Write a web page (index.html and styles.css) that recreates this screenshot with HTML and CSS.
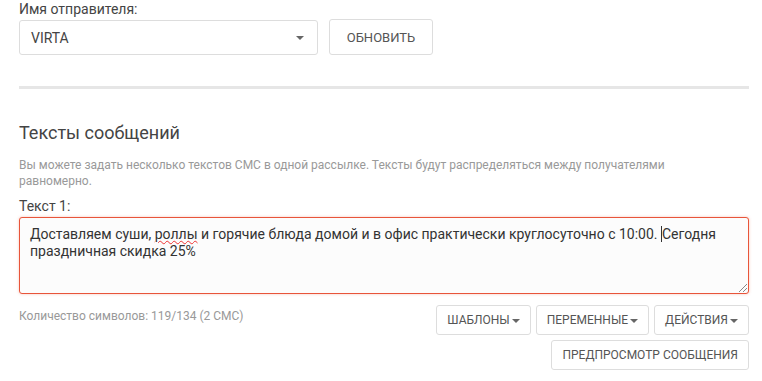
FILE: index.html
```html
<!DOCTYPE html>
<html lang="ru">
<head>
    <meta charset="UTF-8">
    <meta name="viewport" content="width=device-width, initial-scale=1.0">
    <title>Рассылка СМС</title>
    <link rel="stylesheet" href="styles.css">
</head>
<body>
    <div class="page">
        <div class="form-group">
            <label class="label" for="sender">Имя отправителя:</label>
            <div class="sender-row">
                <div class="select" id="sender">
                    <span>VIRTA</span>
                    <span class="caret"></span>
                </div>
                <button class="btn btn-lg">Обновить</button>
            </div>
        </div>

        <hr class="divider">

        <h2 class="section-title">Тексты сообщений</h2>
        <p class="hint">Вы можете задать несколько текстов СМС в одной рассылке. Тексты будут распределяться между получателями равномерно.</p>

        <div class="form-group">
            <label class="label" for="text1">Текст 1:</label>
            <div class="textarea" id="text1">Доставляем суши, <span class="misspelled">роллы</span> и горячие блюда домой и в офис практически круглосуточно с 10:00. <span class="cursor"></span>Сегодня праздничная скидка 25%<span class="grip"></span></div>
        </div>

        <div class="toolbar">
            <div class="counter">Количество символов: 119/134 (2 СМС)</div>
            <div class="actions">
                <div class="btn-row">
                    <button class="btn">Шаблоны<span class="caret"></span></button>
                    <button class="btn">Переменные<span class="caret"></span></button>
                    <button class="btn">Действия<span class="caret"></span></button>
                </div>
                <div class="btn-row">
                    <button class="btn">Предпросмотр сообщения</button>
                </div>
            </div>
        </div>
    </div>
</body>
</html>
```

FILE: styles.css
```css
body {
    margin: 0;
    font-family: Roboto, "Liberation Sans", sans-serif;
    color: #333;
    background: #fff;
}
.page {
    padding: 0 13px 0 19px;
}
.label {
    display: block;
    font-size: 14px;
    line-height: 18px;
    color: #444;
    margin-bottom: 2px;
}
.form-group {
    margin: 0;
}
.sender-row {
    display: flex;
    gap: 11px;
}
.select {
    width: 299px;
    height: 35px;
    box-sizing: border-box;
    border: 1px solid #ddd;
    border-radius: 3px;
    display: flex;
    align-items: center;
    justify-content: space-between;
    padding: 0 13px 0 11px;
    font-size: 14px;
    color: #444;
}
.caret {
    display: inline-block;
    width: 0;
    height: 0;
    border-left: 4px solid transparent;
    border-right: 4px solid transparent;
    border-top: 4px solid #666;
    vertical-align: middle;
}
.btn {
    font-family: inherit;
    background: #fff;
    border: 1px solid #ddd;
    border-radius: 3px;
    color: #555;
    font-size: 12px;
    text-transform: uppercase;
    height: 30px;
    padding: 0 10px;
    cursor: pointer;
}
.btn .caret {
    margin-left: 2px;
}
.btn-lg {
    height: 36px;
    width: 104px;
    margin-top: -1px;
    font-size: 13px;
}
.divider {
    border: 0;
    height: 3px;
    background: #e6e6e6;
    margin: 31px 0 0;
}
.section-title {
    font-size: 18px;
    font-weight: 400;
    color: #444;
    margin: 32px 0 0;
    line-height: 24px;
}
.hint {
    font-size: 12px;
    color: #999;
    line-height: 16px;
    margin: 12px 0 8px;
    max-width: 700px;
}
.textarea {
    position: relative;
    height: 77px;
    box-sizing: border-box;
    border: 1px solid #e8553a;
    border-radius: 3px;
    box-shadow: 0 0 3px rgba(232, 85, 58, 0.35);
    background: #fcfcfc;
    padding: 8px 10px;
    font-size: 14px;
    line-height: 17px;
    color: #333;
}
.misspelled {
    text-decoration: underline wavy #e33;
    text-decoration-thickness: 1px;
}
.cursor {
    display: inline-block;
    width: 1px;
    height: 16px;
    background: #333;
    vertical-align: -3px;
}
.grip {
    position: absolute;
    right: 1px;
    bottom: 1px;
    width: 8px;
    height: 8px;
    background: linear-gradient(135deg, transparent 45%, #888 45%, #888 52%, transparent 52%, transparent 70%, #888 70%, #888 77%, transparent 77%);
}
.toolbar {
    display: flex;
    justify-content: space-between;
    margin-top: 11px;
}
.counter {
    font-size: 12px;
    color: #999;
    padding-top: 4px;
}
.actions {
    display: flex;
    flex-direction: column;
    align-items: flex-end;
    gap: 5px;
}
.btn-row {
    display: flex;
    gap: 5px;
}
```
